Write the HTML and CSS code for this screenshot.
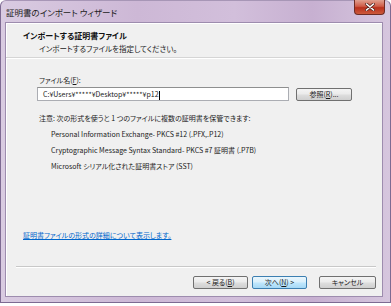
FILE: index.html
```html
<!DOCTYPE html>
<html lang="ja">
<head>
    <meta charset="UTF-8">
    <meta name="viewport" content="width=device-width, initial-scale=1.0">
    <title>証明書のインポート ウィザード</title>
    <link rel="stylesheet" href="styles.css">
</head>
<body>
    <div class="window">
        <div class="titlebar">
            <span class="title">証明書のインポート ウィザード</span>
            <span class="close">
                <svg width="10" height="8" viewBox="0 0 10 8">
                    <path d="M1.5 1 L8.5 7 M8.5 1 L1.5 7" stroke="#5a2620" stroke-width="3" stroke-linecap="round"/>
                    <path d="M1.5 1 L8.5 7 M8.5 1 L1.5 7" stroke="#ffffff" stroke-width="1.6" stroke-linecap="round"/>
                </svg>
            </span>
        </div>
        <div class="client">
            <div class="header">
                <div class="header-title">インポートする証明書ファイル</div>
                <div class="header-sub">インポートするファイルを指定してください。</div>
            </div>
            <div class="content">
                <div class="label">ファイル名(<u>F</u>):</div>
                <div class="file-row">
                    <div class="input">C:¥Users¥*****¥Desktop¥*****¥p12<span class="caret"></span></div>
                    <button class="btn btn-browse">参照(<u>R</u>)...</button>
                </div>
                <div class="note">注意: 次の形式を使うと 1 つのファイルに複数の証明書を保管できます:</div>
                <ul class="formats">
                    <li>Personal Information Exchange- PKCS #12 (.PFX,.P12)</li>
                    <li>Cryptographic Message Syntax Standard- PKCS #7 証明書 (.P7B)</li>
                    <li>Microsoft シリアル化された証明書ストア (SST)</li>
                </ul>
                <a class="link" href="#">証明書ファイルの形式の詳細について表示します。</a>
            </div>
            <div class="footer">
                <button class="btn btn-back">&lt; 戻る(<u>B</u>)</button>
                <button class="btn btn-next">次へ(<u>N</u>) &gt;</button>
                <button class="btn btn-cancel">キャンセル</button>
            </div>
        </div>
    </div>
</body>
</html>
```

FILE: styles.css
```css
body {
    margin: 0;
    background-color: #ffffff;
    font-family: "Noto Sans CJK JP", "Liberation Sans", sans-serif;
    font-feature-settings: "palt";
    font-size: 8px;
    color: #1a1a1a;
}
.window {
    width: 391px;
    height: 303px;
    box-sizing: border-box;
    display: flex;
    flex-direction: column;
    padding: 0 7px 5px 4px;
    border: 1px solid #7d6a92;
    border-top-color: #a796b6;
    border-radius: 6px 6px 0 0;
    background: linear-gradient(90deg, #d9cbe1 0%, #cdb8d6 35%, #d2bfdb 60%, #c7b0d1 80%, #d6c6de 100%);
}
.titlebar {
    height: 21px;
    display: flex;
    justify-content: space-between;
    align-items: flex-start;
}
.title {
    margin: 5px 0 0 1px;
    font-size: 8.5px;
    color: #222222;
}
.close {
    width: 29px;
    height: 14px;
    margin-top: -1px;
    margin-right: -2px;
    display: flex;
    align-items: center;
    justify-content: center;
    border: 1px solid #6e2c24;
    border-top: none;
    border-radius: 0 0 4px 4px;
    background: linear-gradient(180deg, #e0a090 0%, #cf5c48 45%, #b9301d 55%, #cc5a3c 100%);
}
.client {
    flex: 1;
    display: flex;
    flex-direction: column;
    background-color: #f0f0f0;
    border: 1px solid #9d8cae;
    box-shadow: inset 1px 1px 0 #ffffff;
}
.header {
    padding: 7px 0 2px 17px;
    border-bottom: 1px solid #d5d5d5;
    box-shadow: 0 1px 0 #ffffff;
}
.header-title {
    font-weight: bold;
    font-size: 8px;
    line-height: 12px;
    color: #111111;
}
.header-sub {
    padding-left: 16px;
    line-height: 13px;
    font-size: 7.5px;
}
.content {
    flex: 1;
    padding: 16px 0 0 31px;
    font-size: 7px;
}
.label {
    padding-left: 2px;
    line-height: 12px;
}
.file-row {
    display: flex;
    align-items: center;
    gap: 7px;
    margin-top: 1px;
}
.input {
    width: 245px;
    height: 12px;
    padding-left: 5px;
    box-sizing: content-box;
    border: 1px solid #abadb3;
    border-top-color: #8e8f8f;
    background-color: #ffffff;
    line-height: 12px;
    font-size: 7px;
}
.caret {
    display: inline-block;
    width: 1px;
    height: 9px;
    background-color: #000000;
    vertical-align: middle;
}
.btn {
    font-family: inherit;
    font-feature-settings: "palt";
    font-size: 7px;
    color: #1a1a1a;
    height: 13px;
    padding: 0;
    line-height: 11px;
    border: 1px solid #707070;
    border-radius: 2px;
    background: linear-gradient(180deg, #f4f4f4 0%, #ebebeb 45%, #dddddd 55%, #cfcfcf 100%);
}
.btn-browse {
    width: 56px;
}
.note {
    margin-top: 11px;
    padding-left: 2px;
    line-height: 12px;
}
.formats {
    list-style: none;
    margin: 2px 0 0;
    padding-left: 14px;
}
.formats li {
    line-height: 16px;
}
.link {
    display: inline-block;
    margin: 55px 0 0 -14px;
    line-height: 12px;
    color: #0066cc;
}
.footer {
    margin: 0 6px 0 10px;
    padding: 9px 0 7px;
    display: flex;
    justify-content: flex-end;
    gap: 4px;
    border-top: 1px solid #c8c8c8;
    box-shadow: inset 0 1px 0 #ffffff;
}
.btn-back,
.btn-next {
    width: 55px;
}
.btn-next {
    border-color: #3c7fb1;
    background: linear-gradient(180deg, #eaf6fd 0%, #d9f0fc 45%, #bee6fd 55%, #a7d9f5 100%);
}
.btn-cancel {
    width: 57px;
    margin-left: 8px;
}
```
